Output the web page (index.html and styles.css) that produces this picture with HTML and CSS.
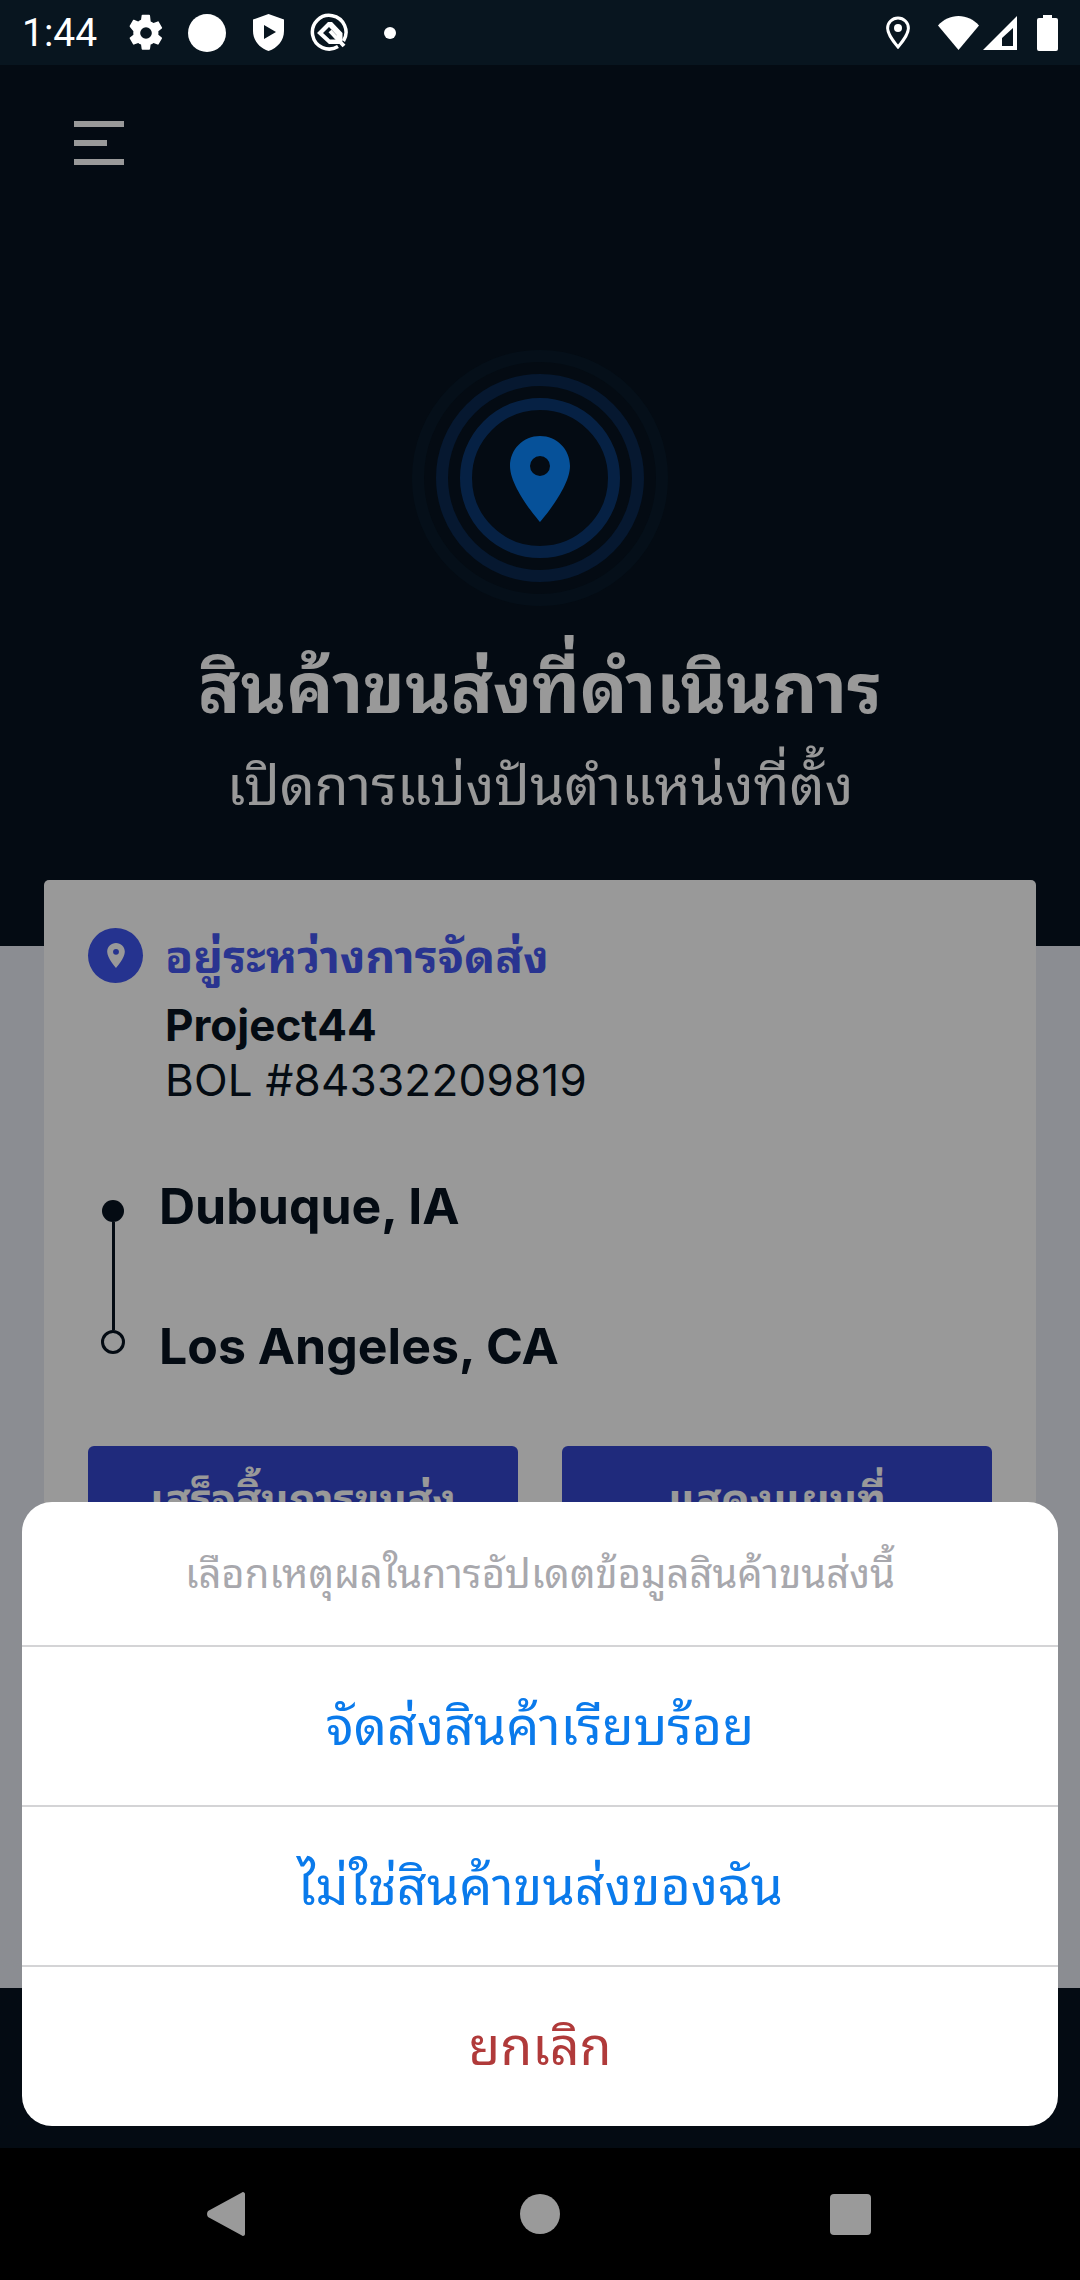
FILE: index.html
```html
<!DOCTYPE html>
<html lang="th">
<head>
  <meta charset="UTF-8" />
  <meta name="viewport" content="width=device-width, initial-scale=1.0"/>
  <title>Shipments</title>
  <link rel="stylesheet" href="styles.css">
</head>
<body>
  <div class="status-bar">
    <span class="clock">1:44</span>
    <div class="status-left">
      <svg class="ic-gear" viewBox="0 0 24 24"><path fill="#fff" fill-rule="evenodd" d="M19.4 13c.04-.33.06-.66.06-1s-.02-.67-.06-1l2.1-1.65c.2-.15.24-.42.12-.64l-2-3.46c-.12-.22-.38-.3-.6-.22l-2.5 1c-.52-.4-1.08-.73-1.7-.98L14.4 1.4c-.04-.24-.25-.4-.5-.4h-4c-.25 0-.46.16-.5.4l-.38 2.65c-.6.25-1.17.58-1.7.98l-2.48-1c-.23-.08-.49 0-.61.22l-2 3.46c-.13.22-.07.49.12.64L4.45 11c-.04.33-.07.67-.07 1s.03.67.07 1l-2.1 1.65c-.2.15-.25.42-.12.64l2 3.46c.12.22.38.3.6.22l2.5-1c.52.4 1.08.73 1.7.98l.37 2.65c.04.24.25.4.5.4h4c.25 0 .46-.16.5-.4l.38-2.65c.6-.25 1.17-.58 1.7-.98l2.48 1c.23.08.49 0 .61-.22l2-3.46c.12-.22.07-.49-.12-.64L19.4 13zM12 15.5a3.5 3.5 0 1 1 0-7 3.5 3.5 0 0 1 0 7z"/></svg>
      <span class="ic-round"></span>
      <svg class="ic-shield" viewBox="0 0 31 37"><path fill="#fff" fill-rule="evenodd" d="M15.500 0 31 5.500V17c0 9.500-6.500 17-15.500 20C6.500 34 0 26.500 0 17V5.500zM11 11v14l12-7z"/></svg>
      <svg class="ic-q" viewBox="0 0 38 39"><path fill="none" stroke="#fff" stroke-width="3.500" d="M28 33.500A16.800 16.800 0 1 1 33.500 28"/><path fill="#fff" fill-rule="evenodd" d="M18 9 7 20l12 11h10.500l3-3V20L22 9zm1 5-6 6 7 6.500h6.500V22z"/><path stroke="#fff" stroke-width="4" d="m20 18 14 15"/></svg>
      <span class="ic-dot"></span>
    </div>
    <div class="status-right">
      <svg class="ic-loc" viewBox="0 0 24 33"><path fill="none" stroke="#fff" stroke-width="3" d="M12 2C6.200 2 1.600 6.500 1.600 12.200 1.600 19 12 31 12 31s10.400-12 10.400-18.800C22.400 6.500 17.800 2 12 2z"/><circle cx="12" cy="12" r="4" fill="#fff"/></svg>
      <svg class="ic-wifi" viewBox="0 0 41 34"><path fill="#fff" d="M20.500 34 0 9.500C5.500 3.500 12.500 0 20.500 0S35.500 3.500 41 9.500z"/></svg>
      <svg class="ic-signal" viewBox="0 0 34 34"><path fill="#fff" fill-rule="evenodd" d="M34 0v34H0zM30 12 19 22v8h11z"/></svg>
      <svg class="ic-battery" viewBox="0 0 21 36"><path fill="#fff" d="M6 0h9v3h4a2 2 0 0 1 2 2v29a2 2 0 0 1-2 2H2a2 2 0 0 1-2-2V5a2 2 0 0 1 2-2h4z"/></svg>
    </div>
  </div>

  <div class="screen">
    <div class="hero">
      <div class="menu-btn">
        <span class="menu-line"></span>
        <span class="menu-line short"></span>
        <span class="menu-line"></span>
      </div>
      <div class="rings">
        <svg viewBox="0 0 260 260">
          <circle cx="130" cy="130" r="122" fill="none" stroke="#091a2a" stroke-width="12"/>
          <circle cx="130" cy="130" r="98" fill="none" stroke="#0a2850" stroke-width="12"/>
          <circle cx="130" cy="130" r="74" fill="none" stroke="#0b3872" stroke-width="12"/>
          <path fill="#0a87ff" fill-rule="evenodd" d="M130 88c-16.600 0-30 13.200-30 30 0 22 30 56 30 56s30-34 30-56c0-16.800-13.400-30-30-30zm0 40a10 10 0 1 1 0-20 10 10 0 0 1 0 20z"/>
        </svg>
      </div>
      <h1 class="hero-title">สินค้าขนส่งที่ดำเนินการ</h1>
      <p class="hero-sub">เปิดการแบ่งปันตำแหน่งที่ตั้ง</p>
    </div>

    <div class="content">
      <div class="card">
        <div class="card-head">
          <span class="pin-badge">
            <svg viewBox="0 0 24 34"><path fill="#fff" fill-rule="evenodd" d="M12 0C5.400 0 0 5.300 0 12c0 8.800 12 22 12 22s12-13.200 12-22C24 5.300 18.600 0 12 0zm0 16a4 4 0 1 1 0-8 4 4 0 0 1 0 8z"/></svg>
          </span>
          <div class="card-info">
            <div class="state">อยู่ระหว่างการจัดส่ง</div>
            <div class="carrier">Project44</div>
            <div class="bol">BOL #84332209819</div>
          </div>
        </div>
        <div class="route">
          <div class="route-line">
            <span class="stop-dot"></span>
            <span class="stop-bar"></span>
            <span class="stop-ring"></span>
          </div>
          <div class="route-names">
            <div class="city">Dubuque, IA</div>
            <div class="city">Los Angeles, CA</div>
          </div>
        </div>
        <div class="actions">
          <button class="action">เสร็จสิ้นการขนส่ง</button>
          <button class="action">แสดงแผนที่</button>
        </div>
      </div>
    </div>

    <div class="footer"></div>

    <div class="scrim"></div>

    <div class="sheet">
      <div class="sheet-title">เลือกเหตุผลในการอัปเดตข้อมูลสินค้าขนส่งนี้</div>
      <div class="sheet-row">จัดส่งสินค้าเรียบร้อย</div>
      <div class="sheet-row">ไม่ใช่สินค้าขนส่งของฉัน</div>
      <div class="sheet-row cancel">ยกเลิก</div>
    </div>
  </div>

  <div class="nav-bar">
    <svg class="nav-back" viewBox="0 0 38 44"><path fill="#9a9a9a" d="M36 0c1 0 2 1 2 2v40c0 1-1 2-2 2-.600 0-1-.200-1.500-.800L1 25c-1.300-1.800-1.300-4.200 0-6L34.500.800C35 .200 35.400 0 36 0z"/></svg>
    <span class="nav-home"></span>
    <span class="nav-recent"></span>
  </div>
</body>
</html>
```

FILE: styles.css
```css
* { box-sizing: border-box; }
body {
  margin: 0; width: 1080px; height: 2280px; overflow: hidden;
  display: flex; flex-direction: column; background: #000;
  font-family: Inter, "Noto Sans Thai Looped", "Noto Sans Thai UI", Loma, Garuda, "Noto Sans Thai", "Noto Sans", sans-serif;
}

.status-bar {
  height: 65px; background: #08151f; color: #fff;
  display: flex; align-items: center; padding: 0 22px;
}
.clock { font: 39px Roboto, sans-serif; width: 104px; }
.status-left { display: flex; align-items: center; flex: 1; }
.status-right { display: flex; align-items: center; }
.ic-gear { width: 40px; height: 40px; }
.ic-round { width: 38px; height: 38px; border-radius: 50%; background: #fff; margin-left: 22px; }
.ic-shield { width: 31px; height: 37px; margin-left: 27px; }
.ic-q { width: 38px; height: 39px; margin-left: 26px; }
.ic-dot { width: 12px; height: 12px; border-radius: 50%; background: #fff; margin-left: 36px; }
.ic-loc { width: 24px; height: 33px; }
.ic-wifi { width: 41px; height: 34px; margin-left: 28px; }
.ic-signal { width: 34px; height: 34px; margin-left: 4px; }
.ic-battery { width: 21px; height: 36px; margin-left: 20px; }

.screen { flex: 1; position: relative; display: flex; flex-direction: column; }
.hero {
  height: 881px; background: #071320; color: #fff; flex: none;
  display: flex; flex-direction: column; align-items: center;
}
.menu-btn {
  align-self: flex-start; margin: 56px 0 0 74px;
  display: flex; flex-direction: column; gap: 13px;
}
.menu-line { display: block; width: 50px; height: 6px; background: #fff; }
.menu-line.short { width: 33px; }
.rings { width: 260px; height: 260px; margin-top: 183px; flex: none; }
.rings svg { display: block; width: 260px; height: 260px; }
.hero-title { font-size: 70px; font-weight: 700; margin: 38px 0 0; line-height: 84px; }
.hero-sub { font-size: 55px; font-weight: 400; margin: 21px 0 0; line-height: 68px; }

.content {
  background: #e8ebf3; height: 1042px; flex: none; padding: 0 44px;
  display: flex; flex-direction: column; position: relative;
}
.card {
  background: #fff; border-radius: 5px; height: 1108px; flex: none; margin-top: -66px;
  padding: 48px 44px 0; color: #071320;
}
.card-head { display: flex; }
.pin-badge {
  width: 55px; height: 55px; border-radius: 50%; background: #3f55ee;
  display: flex; align-items: center; justify-content: center; flex: none;
}
.pin-badge svg { width: 18px; height: 25px; }
.card-info { margin-left: 22px; }
.state { font-size: 46px; font-weight: 700; color: #4558f0; line-height: 56px; margin-bottom: 13px; }
.carrier { font-size: 44px; font-weight: 700; line-height: 56px; }
.bol { font-size: 44px; font-weight: 400; line-height: 54px; letter-spacing: .2px; }

.route { display: flex; margin-top: 70px; }
.route-line {
  width: 74px; display: flex; flex-direction: column; align-items: center;
  margin: 23px 9px 0 -12px; flex: none;
}
.stop-dot { width: 22px; height: 22px; border-radius: 50%; background: #071320; }
.stop-bar { width: 3px; height: 108px; background: #071320; }
.stop-ring { width: 24px; height: 24px; border-radius: 50%; border: 3px solid #071320; }
.route-names { display: flex; flex-direction: column; gap: 82px; }
.city { font-size: 50px; font-weight: 700; line-height: 58px; }

.actions { display: flex; gap: 44px; margin-top: 71px; }
.action {
  flex: 1; height: 128px; border: none; border-radius: 6px; padding: 0 0 30px;
  background: #3446cf; color: #fff; font: inherit; font-size: 42px; font-weight: 700;
}

.footer { flex: 1; background: #071320; }

.scrim { position: absolute; inset: 0; background: rgba(0, 0, 0, .4); }
.sheet {
  position: absolute; left: 22px; right: 22px; top: 1437px; height: 624px;
  background: #fff; border-radius: 30px; overflow: hidden;
  display: flex; flex-direction: column;
}
.sheet-title {
  height: 143px; flex: none; display: flex; align-items: center; justify-content: center;
  padding-bottom: 8px; font-size: 40px; color: #a8a8ad;
}
.sheet-row {
  height: 160px; flex: none; border-top: 2px solid #d4d4d6; padding-bottom: 9px;
  display: flex; align-items: center; justify-content: center;
  font-size: 52px; color: #0a7aeb;
}
.sheet-row.cancel { color: #b03a3a; }

.nav-bar {
  height: 132px; background: #000; flex: none;
  display: flex; align-items: center; padding: 0 209px 0 207px;
  justify-content: space-between;
}
.nav-back { width: 38px; height: 44px; }
.nav-home { width: 40px; height: 40px; border-radius: 50%; background: #9a9a9a; margin-left: 4px; }
.nav-recent { width: 41px; height: 41px; border-radius: 4px; background: #9a9a9a; }
```
